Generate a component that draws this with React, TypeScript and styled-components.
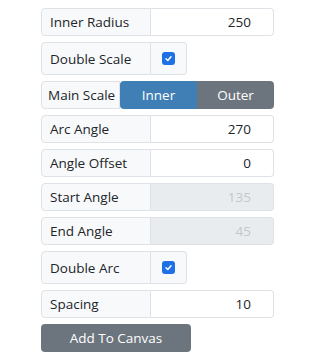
import React from 'react';
import styled, { createGlobalStyle } from 'styled-components';

const GlobalStyle = createGlobalStyle`
  body {
    margin: 0;
    background: #fff;
    font-family: 'Open Sans', 'Noto Sans', sans-serif;
    color: #212529;
  }
`;

type Field = {
  label: string;
  kind: 'number' | 'check' | 'toggle';
  value?: string;
  disabled?: boolean;
};

const fields: Field[] = [
  { label: 'Inner Radius', kind: 'number', value: '250' },
  { label: 'Double Scale', kind: 'check' },
  { label: 'Main Scale', kind: 'toggle' },
  { label: 'Arc Angle', kind: 'number', value: '270' },
  { label: 'Angle Offset', kind: 'number', value: '0' },
  { label: 'Start Angle', kind: 'number', value: '135', disabled: true },
  { label: 'End Angle', kind: 'number', value: '45', disabled: true },
  { label: 'Double Arc', kind: 'check' },
  { label: 'Spacing', kind: 'number', value: '10' },
];

const CheckMark = () => (
  <svg width='13' height='13' viewBox='0 0 13 13'>
    <rect x='0' y='0' width='13' height='13' rx='3' fill='#1f6fe5' />
    <path
      d='M4 6.8 L5.8 8.5 L9 4.8'
      fill='none'
      stroke='#fff'
      strokeWidth='1.5'
      strokeLinecap='round'
      strokeLinejoin='round'
    />
  </svg>
);

export default function App() {
  return (
    <>
      <GlobalStyle />
      <Panel>
        {fields.map((f) => {
          if (f.kind === 'toggle') {
            return (
              <Group key={f.label} $tall={false}>
                <Addon $width={79} $pad={6}>
                  {f.label}
                </Addon>
                <Toggle>
                  <ToggleButton $active>Inner</ToggleButton>
                  <ToggleButton>Outer</ToggleButton>
                </Toggle>
              </Group>
            );
          }
          if (f.kind === 'check') {
            return (
              <Group key={f.label} $tall>
                <Addon>{f.label}</Addon>
                <CheckCell>
                  <CheckMark />
                </CheckCell>
              </Group>
            );
          }
          return (
            <Group key={f.label} $tall={false}>
              <Addon>{f.label}</Addon>
              <NumberField $disabled={f.disabled}>{f.value}</NumberField>
            </Group>
          );
        })}
        <AddButton>Add To Canvas</AddButton>
      </Panel>
    </>
  );
}

const Panel = styled.div`
  display: flex;
  flex-direction: column;
  align-items: flex-start;
  gap: 6px;
  padding: 8px 0 0 41px;
  width: 233px;
`;

const Group = styled.div<{ $tall: boolean }>`
  display: flex;
  height: ${(p) => (p.$tall ? '33px' : '28px')};
  font-size: 13.5px;
`;

const Addon = styled.div<{ $width?: number; $pad?: number }>`
  box-sizing: border-box;
  width: ${(p) => p.$width ?? 110}px;
  padding: 0 ${(p) => p.$pad ?? 8}px;
  display: flex;
  align-items: center;
  background: #f8f9fa;
  border: 1px solid #dee2e6;
  border-radius: 4px 0 0 4px;
  white-space: nowrap;
`;

const NumberField = styled.div<{ $disabled?: boolean }>`
  box-sizing: border-box;
  width: 123px;
  display: flex;
  align-items: center;
  justify-content: flex-end;
  padding-right: 22px;
  border: 1px solid #dee2e6;
  border-left: none;
  border-radius: 0 4px 4px 0;
  background: ${(p) => (p.$disabled ? '#e9ecef' : '#fff')};
  color: ${(p) => (p.$disabled ? '#c3c7cb' : '#212529')};
`;

const CheckCell = styled.div`
  box-sizing: border-box;
  width: 36px;
  display: flex;
  align-items: center;
  justify-content: center;
  border: 1px solid #dee2e6;
  border-left: none;
  border-radius: 0 4px 4px 0;
  background: #f8f9fa;
`;

const Toggle = styled.div`
  display: flex;
  width: 154px;
  border-radius: 0 4px 4px 0;
  overflow: hidden;
`;

const ToggleButton = styled.div<{ $active?: boolean }>`
  flex: 1;
  display: flex;
  align-items: center;
  justify-content: center;
  color: #fff;
  font-size: 13.5px;
  background: ${(p) => (p.$active ? '#3f7fb5' : '#6c757d')};
  border-radius: ${(p) => (p.$active ? '4px 0 0 4px' : '0')};
`;

const AddButton = styled.button`
  width: 150px;
  height: 28px;
  border: none;
  border-radius: 4px;
  background: #6c757d;
  color: #fff;
  font-family: inherit;
  font-size: 13.5px;
  cursor: pointer;
`;
